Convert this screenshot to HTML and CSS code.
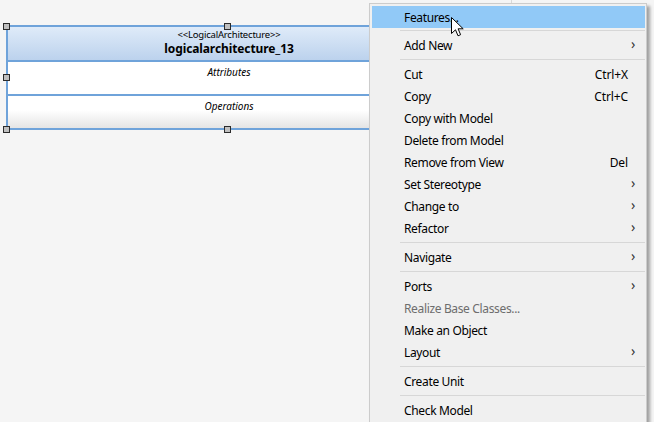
FILE: index.html
```html
<!DOCTYPE html>
<html>
<head>
<meta charset="utf-8">
<link rel="stylesheet" href="styles.css">
</head>
<body>
<div class="canvas">
  <div class="panel-line"></div>
  <div class="node">
    <div class="node-head">
      <div class="stereo">&lt;&lt;LogicalArchitecture&gt;&gt;</div>
      <div class="name">logicalarchitecture_13</div>
    </div>
    <div class="node-attrs">Attributes</div>
    <div class="node-ops">Operations</div>
  </div>
  <div class="handle h-tl"></div>
  <div class="handle h-tc"></div>
  <div class="handle h-ml"></div>
  <div class="handle h-bl"></div>
  <div class="handle h-bc"></div>

  <div class="menu">
    <div class="item hover"><span class="label">Features...</span></div>
    <div class="sep first"></div>
    <div class="item"><span class="label">Add New</span><span class="arrow">&#x203A;</span></div>
    <div class="sep"></div>
    <div class="item"><span class="label">Cut</span><span class="key">Ctrl+X</span></div>
    <div class="item"><span class="label">Copy</span><span class="key">Ctrl+C</span></div>
    <div class="item"><span class="label">Copy with Model</span></div>
    <div class="item"><span class="label">Delete from Model</span></div>
    <div class="item"><span class="label">Remove from View</span><span class="key">Del</span></div>
    <div class="item"><span class="label">Set Stereotype</span><span class="arrow">&#x203A;</span></div>
    <div class="item"><span class="label">Change to</span><span class="arrow">&#x203A;</span></div>
    <div class="item"><span class="label">Refactor</span><span class="arrow">&#x203A;</span></div>
    <div class="sep"></div>
    <div class="item"><span class="label">Navigate</span><span class="arrow">&#x203A;</span></div>
    <div class="sep"></div>
    <div class="item"><span class="label">Ports</span><span class="arrow">&#x203A;</span></div>
    <div class="item disabled"><span class="label">Realize Base Classes...</span></div>
    <div class="item"><span class="label">Make an Object</span></div>
    <div class="item"><span class="label">Layout</span><span class="arrow">&#x203A;</span></div>
    <div class="sep"></div>
    <div class="item"><span class="label">Create Unit</span></div>
    <div class="sep"></div>
    <div class="item"><span class="label">Check Model</span></div>
  </div>

  <svg class="cursor" width="14" height="21" viewBox="0 0 14 21">
    <path d="M0.5 0.5 L0.5 16.5 L4.5 12.8 L7 18.8 L9.6 17.7 L7.1 11.8 L12.2 11.8 Z" fill="#fff" stroke="#000" stroke-width="1" stroke-linejoin="miter"/>
  </svg>
</div>
</body>
</html>
```
FILE: styles.css
```css
html, body {
  margin: 0;
  padding: 0;
}
body {
  width: 654px;
  height: 422px;
  overflow: hidden;
  background: #f5f5f5;
  font-family: "Noto Sans", "Open Sans", sans-serif;
}
.canvas {
  position: relative;
  width: 654px;
  height: 422px;
  overflow: hidden;
}
.panel-line {
  position: absolute;
  left: 511px;
  top: 0;
  width: 1px;
  height: 4px;
  background: #d9d9d9;
}
.node {
  position: absolute;
  left: 6px;
  top: 25px;
  width: 442px;
  border: 2px solid #6fa3da;
  display: flex;
  flex-direction: column;
  color: #000;
}
.node-head {
  height: 35px;
  box-sizing: border-box;
  border-bottom: 2px solid #6fa3da;
  background: linear-gradient(#dfebf9, #bcd2ed);
  display: flex;
  flex-direction: column;
  align-items: center;
  padding-top: 2px;
}
.stereo {
  font-size: 9.5px;
  line-height: 12px;
  letter-spacing: -0.2px;
}
.name {
  font-size: 12px;
  font-weight: bold;
  line-height: 16px;
  letter-spacing: -0.1px;
}
.node-attrs {
  height: 34px;
  box-sizing: border-box;
  border-bottom: 2px solid #6fa3da;
  background: #fff;
  text-align: center;
  font-size: 10px;
  font-style: italic;
  line-height: 14px;
  padding-top: 3px;
}
.node-ops {
  height: 32px;
  box-sizing: border-box;
  background: linear-gradient(#fff 0%, #fff 45%, #e4e4e4 100%);
  text-align: center;
  font-size: 10px;
  font-style: italic;
  line-height: 14px;
  padding-top: 3px;
}
.handle {
  position: absolute;
  width: 5px;
  height: 5px;
  background: #c0c0c0;
  border: 1px solid #2b2b2b;
}
.h-tl { left: 3px; top: 23px; }
.h-tc { left: 224px; top: 23px; }
.h-ml { left: 3px; top: 74px; }
.h-bl { left: 3px; top: 126px; }
.h-bc { left: 224px; top: 126px; }

.menu {
  position: absolute;
  left: 369px;
  top: 3px;
  width: 278px;
  box-sizing: border-box;
  border: 1px solid #cccccc;
  background: #f0f0f0;
  padding: 2px 1px 2px 2px;
  box-shadow: 3px 3px 3px rgba(0, 0, 0, 0.35);
  display: flex;
  flex-direction: column;
  font-size: 12px;
  letter-spacing: -0.35px;
  color: #000;
}
.item {
  height: 22px;
  flex: none;
  display: flex;
  align-items: center;
  padding: 0 10px 0 32px;
}
.item.hover {
  background: #91c9f7;
}
.item .label {
  flex: 1;
  white-space: nowrap;
}
.item .key {
  padding-right: 7px;
  letter-spacing: -0.1px;
}
.item .arrow {
  font-size: 14px;
  line-height: 14px;
  color: #333;
  margin-top: -2px;
}
.item.disabled {
  color: #6d6d6d;
}
.sep {
  height: 1px;
  flex: none;
  margin: 3px 0 3px 28px;
  background: #d7d7d7;
}
.sep.first {
  margin: 2px 0 3px 28px;
}
.cursor {
  position: absolute;
  left: 451px;
  top: 17px;
}
```
